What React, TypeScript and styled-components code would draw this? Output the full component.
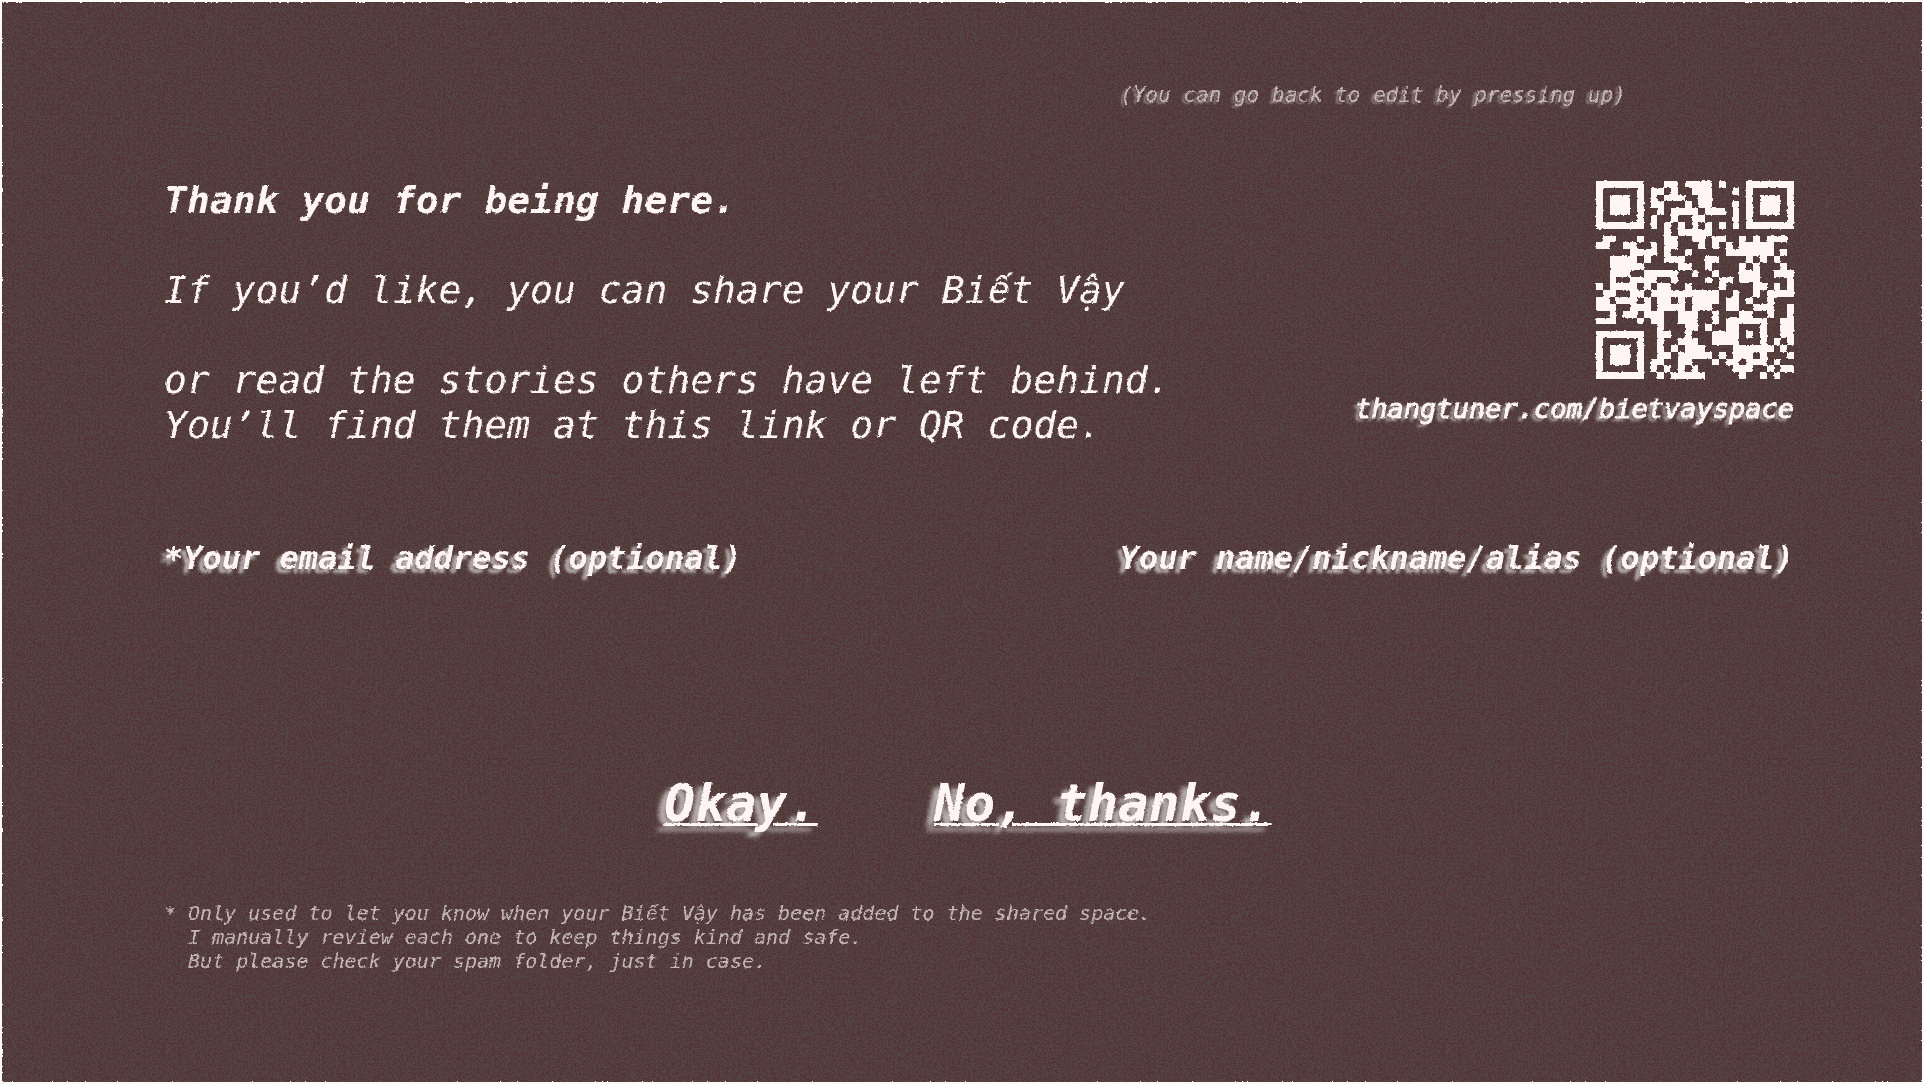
import React from "react";
import styled, { createGlobalStyle } from "styled-components";

/* Each string is one row of the QR code; 1 is a filled module. */
const QR_ROWS = [
  "11111110001101111010001111111",
  "10000010110100111000101000001",
  "10111010101110011000001011101",
  "10111010110001011000101011101",
  "10111010010111101110101011101",
  "10000010100100110000101000001",
  "11111110101010101010101111111",
  "00000000001011111000000000000",
  "01100010001100110110010101110",
  "11001100101100010101011111000",
  "00000111101001000001111111010",
  "00111101001110001100001010100",
  "00111110000011001000010100010",
  "00111001111100100100011100111",
  "00100111100100001011011100001",
  "10111101011001000010000110101",
  "01100110111111111100100101111",
  "11011101011010111101101001000",
  "11100111011110111001100111001",
  "00101101110011100100011001001",
  "11100010110011100101111110011",
  "00000000010001101001100010011",
  "11111110011001000111101010011",
  "10000010010011100111100010101",
  "10111010010101110000111111010",
  "10111010011011111010111010001",
  "10111010110011000101101110100",
  "10000010101010100000111001011",
  "11111110010111110000010010100",
];

const QR_PATH = QR_ROWS.map((row, y) =>
  Array.from(row.matchAll(/1+/g), (run) => `M${run.index} ${y}h${run[0].length}v1h-${run[0].length}z`).join("")
).join("");

const INK = "#fff5f5";
const MUTED = "#c6b7b7";
const MONO = `"DejaVu Sans Mono", "Liberation Mono", monospace`;

const GlobalStyle = createGlobalStyle`
  *, *::before, *::after { box-sizing: border-box; }
  body { margin: 0; background: #fffafa; }
`;

const Defs = styled.svg`
  position: absolute;
  width: 0;
  height: 0;
`;

const Page = styled.div`
  padding: 2px;
`;

const Surface = styled.main`
  position: relative;
  min-height: calc(100vh - 4px);
  padding-bottom: 60px;
  background: #543c3d;
  color: ${INK};
  font-family: ${MONO};
  font-style: italic;
  filter: url(#rough);
`;

const Grain = styled.svg`
  position: absolute;
  inset: 0;
  width: 100%;
  height: 100%;
`;

const Content = styled.form`
  position: relative;
  display: flex;
  flex-direction: column;
  padding-top: 78px;
`;

const Hint = styled.p`
  margin: 0 296px 0 0;
  text-align: right;
  font-size: 21px;
  line-height: 30px;
  color: ${MUTED};
  text-shadow: -3px 2px 2px rgba(255, 255, 255, 0.35);
`;

const Row = styled.div<{ $top: number }>`
  display: flex;
  justify-content: space-between;
  align-items: flex-start;
  margin-top: ${(p) => p.$top}px;
  padding: 0 128px 0 162px;
`;

const Intro = styled.div`
  display: grid;
  gap: 45px;
`;

const Title = styled.h1`
  margin: 0;
  font-size: 38px;
  line-height: 45px;
  font-weight: 700;
`;

const Line = styled.p`
  margin: 0;
  font-size: 38px;
  line-height: 45px;
`;

const Accented = styled.span`
  font-family: "Liberation Mono", monospace;
  line-height: 1;
`;

const Share = styled.aside`
  display: flex;
  flex-direction: column;
  align-items: flex-end;
  gap: 10px;
  padding-top: 3px;
`;

const Code = styled.svg`
  width: 198px;
  height: 198px;
  fill: ${INK};
`;

const SiteLink = styled.a`
  color: inherit;
  text-decoration: none;
  font-size: 27px;
  line-height: 40px;
  -webkit-text-stroke: 1px ${INK};
  text-shadow: -4px 3px 3px rgba(255, 255, 255, 0.6);
`;

const Field = styled.div<{ $align: "left" | "right" }>`
  display: flex;
  flex-direction: column;
  gap: 8px;
  text-align: ${(p) => p.$align};
`;

const Label = styled.label`
  font-size: 32px;
  line-height: 40px;
  font-weight: 700;
  text-shadow: -5px 4px 3px rgba(255, 255, 255, 0.6);
`;

const Entry = styled.input`
  height: 64px;
  padding: 0;
  border: 0;
  outline: 0;
  background: transparent;
  color: inherit;
  font: inherit;
  font-size: 32px;
  text-align: inherit;
`;

const Actions = styled.div`
  display: flex;
  justify-content: center;
  gap: 116px;
  margin-top: 122px;
  padding-left: 12px;
`;

const Action = styled.button`
  padding: 0;
  border: 0;
  background: none;
  color: inherit;
  cursor: pointer;
  font-family: inherit;
  font-style: inherit;
  font-size: 51px;
  line-height: 64px;
  font-weight: 700;
  text-decoration: underline;
  text-decoration-thickness: 3px;
  text-shadow: -7px 5px 4px rgba(255, 255, 255, 0.6);
`;

const Note = styled.div`
  display: flex;
  gap: 12px;
  margin-top: 65px;
  padding: 0 128px 0 162px;
  font-size: 20px;
  line-height: 24px;
  color: ${MUTED};
`;

const NoteText = styled.p`
  margin: 0;
`;

function BietVay() {
  return (
    <>
      Bi<Accented>ế</Accented>t Vậy
    </>
  );
}

export default function App() {
  return (
    <Page>
      <GlobalStyle />
      <Defs aria-hidden="true">
        <filter id="rough" x="0" y="0" width="100%" height="100%" colorInterpolationFilters="sRGB">
          <feTurbulence type="fractalNoise" baseFrequency="0.4" numOctaves={1} seed={3} result="noise" />
          <feDisplacementMap in="SourceGraphic" in2="noise" scale={3} xChannelSelector="R" yChannelSelector="G" />
        </filter>
        <filter id="grain" x="0" y="0" width="100%" height="100%" colorInterpolationFilters="sRGB">
          <feTurbulence type="fractalNoise" baseFrequency="0.6" numOctaves={1} seed={8} />
          <feColorMatrix values="0 0 0 0 0.33  1 0 0 0 0  1 0 0 0 0  0 0 0 0 1" />
          <feComponentTransfer>
            <feFuncG type="discrete" tableValues="0.21 0.27" />
            <feFuncB type="discrete" tableValues="0.21 0.27" />
          </feComponentTransfer>
        </filter>
      </Defs>
      <Surface>
        <Grain aria-hidden="true">
          <rect width="100%" height="100%" filter="url(#grain)" />
        </Grain>
        <Content onSubmit={(e) => e.preventDefault()}>
          <Hint>(You can go back to edit by pressing up)</Hint>
          <Row $top={68}>
            <Intro>
              <Title>Thank you for being here.</Title>
              <Line>
                If you’d like, you can share your <BietVay />
              </Line>
              <Line>
                or read the stories others have left behind.
                <br />
                You’ll find them at this link or QR code.
              </Line>
            </Intro>
            <Share>
              <Code viewBox="0 0 29 29" shapeRendering="crispEdges" role="img" aria-label="QR code">
                <path d={QR_PATH} />
              </Code>
              <SiteLink href="#bietvayspace">thangtuner.com/bietvayspace</SiteLink>
            </Share>
          </Row>
          <Row $top={90}>
            <Field $align="left">
              <Label htmlFor="email">*Your email address (optional)</Label>
              <Entry id="email" type="email" />
            </Field>
            <Field $align="right">
              <Label htmlFor="alias">Your name/nickname/alias (optional)</Label>
              <Entry id="alias" type="text" />
            </Field>
          </Row>
          <Actions>
            <Action type="submit">Okay.</Action>
            <Action type="button">No, thanks.</Action>
          </Actions>
          <Note>
            <span>*</span>
            <NoteText>
              Only used to let you know when your <BietVay /> has been added to the shared space.
              <br />
              I manually review each one to keep things kind and safe.
              <br />
              But please check your spam folder, just in case.
            </NoteText>
          </Note>
        </Content>
      </Surface>
    </Page>
  );
}
